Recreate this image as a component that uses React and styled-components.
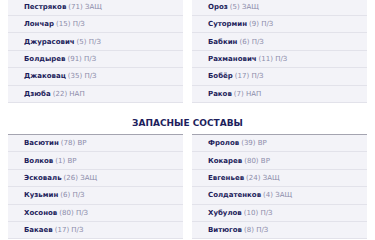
import React from 'react';
import styled, { createGlobalStyle } from 'styled-components';

const GlobalStyle = createGlobalStyle`
  body {
    margin: 0;
    background: #ffffff;
    font-family: "DejaVu Sans", "Noto Sans", sans-serif;
  }
`;

const starters = [
  [
    { name: 'Пестряков', num: 71, pos: 'ЗАЩ' },
    { name: 'Лончар', num: 15, pos: 'П/З' },
    { name: 'Джурасович', num: 5, pos: 'П/З' },
    { name: 'Болдырев', num: 91, pos: 'П/З' },
    { name: 'Джаковац', num: 35, pos: 'П/З' },
    { name: 'Дзюба', num: 22, pos: 'НАП' },
  ],
  [
    { name: 'Ороз', num: 5, pos: 'ЗАЩ' },
    { name: 'Сутормин', num: 9, pos: 'П/З' },
    { name: 'Бабкин', num: 6, pos: 'П/З' },
    { name: 'Рахманович', num: 11, pos: 'П/З' },
    { name: 'Бобёр', num: 17, pos: 'П/З' },
    { name: 'Раков', num: 7, pos: 'НАП' },
  ],
];

const reserves = [
  [
    { name: 'Васютин', num: 78, pos: 'ВР' },
    { name: 'Волков', num: 1, pos: 'ВР' },
    { name: 'Эсковаль', num: 26, pos: 'ЗАЩ' },
    { name: 'Кузьмин', num: 6, pos: 'П/З' },
    { name: 'Хосонов', num: 80, pos: 'П/З' },
    { name: 'Бакаев', num: 17, pos: 'П/З' },
  ],
  [
    { name: 'Фролов', num: 39, pos: 'ВР' },
    { name: 'Кокарев', num: 80, pos: 'ВР' },
    { name: 'Евгеньев', num: 24, pos: 'ЗАЩ' },
    { name: 'Солдатенков', num: 4, pos: 'ЗАЩ' },
    { name: 'Хубулов', num: 10, pos: 'П/З' },
    { name: 'Витюгов', num: 8, pos: 'П/З' },
  ],
];

function Lineup({ teams, bordered }) {
  return (
    <Columns>
      {teams.map((team, i) => (
        <List key={i} bordered={bordered}>
          {team.map((p) => (
            <Row key={p.name}>
              <Name>{p.name}</Name>
              <Meta>({p.num}) {p.pos}</Meta>
            </Row>
          ))}
        </List>
      ))}
    </Columns>
  );
}

export default function App() {
  return (
    <>
      <GlobalStyle />
      <Page>
        <Lineup teams={starters} />
        <Heading>Запасные составы</Heading>
        <Lineup teams={reserves} bordered />
      </Page>
    </>
  );
}

const Page = styled.div`
  padding: 0 8px;
  margin-top: -1.4px;
`;

const Columns = styled.div`
  display: grid;
  grid-template-columns: 175px 175px;
  column-gap: 9px;
`;

const List = styled.ul`
  list-style: none;
  margin: 0;
  padding: 0;
  border-top: ${(p) => (p.bordered ? '1px solid #a4a4b0' : 'none')};
`;

const Row = styled.li`
  height: 16.4px;
  display: flex;
  align-items: center;
  padding-left: 16px;
  background: #f3f3f8;
  border-bottom: 1px solid #e2e2ea;
  font-size: 7px;
  white-space: nowrap;
`;

const Name = styled.span`
  font-weight: 700;
  color: #1e1e5c;
  margin-right: 2px;
`;

const Meta = styled.span`
  color: #8c8caa;
`;

const Heading = styled.h2`
  margin: 14px 0 4px;
  height: 13px;
  line-height: 13px;
  text-align: center;
  text-transform: uppercase;
  font-size: 9px;
  font-weight: 700;
  color: #1e1e5c;
`;
